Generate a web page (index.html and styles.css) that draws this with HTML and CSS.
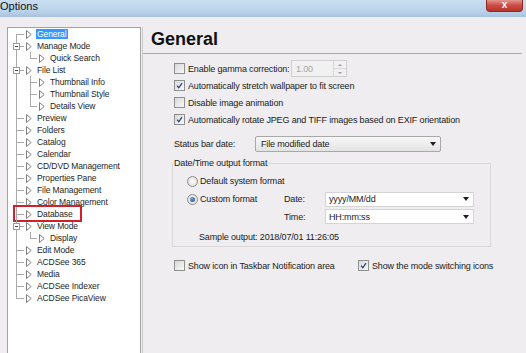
FILE: index.html
```
<!DOCTYPE html>
<html>
<head>
  <meta charset="UTF-8">
  <title>Options</title>
  <meta name="viewport" content="width=device-width,initial-scale=1.0">
  <link rel="stylesheet" href="styles.css">
</head>
<body>
  <svg class="defs" width="0" height="0">
    <symbol id="tri" viewBox="0 0 6 9"><polygon points="0.5,0.5 5.2,4.5 0.5,8.5"/></symbol>
    <symbol id="tick" viewBox="0 0 11 11"><path d="M2.5 5.8 L4.6 8.2 L8.6 2.6"/></symbol>
  </svg>

  <div class="titlebar">
    <span class="title">Options</span>
    <span class="close">x</span>
  </div>

  <div class="win">
    <!-- option tree -->
    <nav class="tree">
      <div class="row"><span class="g1 first"></span><span class="tc"><svg class="tri"><use href="#tri"/></svg></span><span class="lbl sel">General</span></div>
      <div class="row"><span class="g1 tee"><i class="exp"></i></span><span class="tc"><svg class="tri"><use href="#tri"/></svg></span><span class="lbl">Manage Mode</span></div>
      <div class="row"><span class="g1 pass"></span><span class="g2 last"></span><span class="tc"><svg class="tri"><use href="#tri"/></svg></span><span class="lbl">Quick Search</span></div>
      <div class="row"><span class="g1 tee"><i class="exp"></i></span><span class="tc"><svg class="tri"><use href="#tri"/></svg></span><span class="lbl">File List</span></div>
      <div class="row"><span class="g1 pass"></span><span class="g2 tee"></span><span class="tc"><svg class="tri"><use href="#tri"/></svg></span><span class="lbl">Thumbnail Info</span></div>
      <div class="row"><span class="g1 pass"></span><span class="g2 tee"></span><span class="tc"><svg class="tri"><use href="#tri"/></svg></span><span class="lbl">Thumbnail Style</span></div>
      <div class="row"><span class="g1 pass"></span><span class="g2 last"></span><span class="tc"><svg class="tri"><use href="#tri"/></svg></span><span class="lbl">Details View</span></div>
      <div class="row"><span class="g1 tee"></span><span class="tc"><svg class="tri"><use href="#tri"/></svg></span><span class="lbl">Preview</span></div>
      <div class="row"><span class="g1 tee"></span><span class="tc"><svg class="tri"><use href="#tri"/></svg></span><span class="lbl">Folders</span></div>
      <div class="row"><span class="g1 tee"></span><span class="tc"><svg class="tri"><use href="#tri"/></svg></span><span class="lbl">Catalog</span></div>
      <div class="row"><span class="g1 tee"></span><span class="tc"><svg class="tri"><use href="#tri"/></svg></span><span class="lbl">Calendar</span></div>
      <div class="row"><span class="g1 tee"></span><span class="tc"><svg class="tri"><use href="#tri"/></svg></span><span class="lbl">CD/DVD Management</span></div>
      <div class="row"><span class="g1 tee"></span><span class="tc"><svg class="tri"><use href="#tri"/></svg></span><span class="lbl">Properties Pane</span></div>
      <div class="row"><span class="g1 tee"></span><span class="tc"><svg class="tri"><use href="#tri"/></svg></span><span class="lbl">File Management</span></div>
      <div class="row"><span class="g1 tee"></span><span class="tc"><svg class="tri"><use href="#tri"/></svg></span><span class="lbl">Color Management</span></div>
      <div class="row mark"><span class="g1 tee"></span><span class="tc"><svg class="tri"><use href="#tri"/></svg></span><span class="lbl">Database</span></div>
      <div class="row"><span class="g1 tee"><i class="exp"></i></span><span class="tc"><svg class="tri"><use href="#tri"/></svg></span><span class="lbl">View Mode</span></div>
      <div class="row"><span class="g1 pass"></span><span class="g2 last"></span><span class="tc"><svg class="tri"><use href="#tri"/></svg></span><span class="lbl">Display</span></div>
      <div class="row"><span class="g1 tee"></span><span class="tc"><svg class="tri"><use href="#tri"/></svg></span><span class="lbl">Edit Mode</span></div>
      <div class="row"><span class="g1 tee"></span><span class="tc"><svg class="tri"><use href="#tri"/></svg></span><span class="lbl">ACDSee 365</span></div>
      <div class="row"><span class="g1 tee"></span><span class="tc"><svg class="tri"><use href="#tri"/></svg></span><span class="lbl">Media</span></div>
      <div class="row"><span class="g1 tee"></span><span class="tc"><svg class="tri"><use href="#tri"/></svg></span><span class="lbl">ACDSee Indexer</span></div>
      <div class="row"><span class="g1 last"></span><span class="tc"><svg class="tri"><use href="#tri"/></svg></span><span class="lbl">ACDSee PicaView</span></div>
    </nav>

    <!-- settings page -->
    <main class="pane">
      <h1 class="head">General</h1>
      <div class="rule"></div>

      <div class="opts">
        <div class="opt gamma">
          <label class="chk"><span class="box"></span>Enable gamma correction:</label>
          <span class="spin">1.00<span class="arrows"><i class="up"></i><i class="down"></i></span></span>
        </div>
        <div class="opt"><label class="chk"><span class="box"><svg class="tick"><use href="#tick"/></svg></span>Automatically stretch wallpaper to fit screen</label></div>
        <div class="opt"><label class="chk"><span class="box"></span>Disable image animation</label></div>
        <div class="opt"><label class="chk"><span class="box"><svg class="tick"><use href="#tick"/></svg></span>Automatically rotate JPEG and TIFF images based on EXIF orientation</label></div>

        <div class="status">
          <span>Status bar date:</span>
          <span class="select">File modified date<i class="dd"></i></span>
        </div>

        <fieldset class="grp">
          <legend>Date/Time output format</legend>
          <div class="r1"><span class="radio"></span>Default system format</div>
          <div class="fmt">
            <span class="r2"><span class="radio on"></span>Custom format</span>
            <span>Date:</span>
            <span class="combo">yyyy/MM/dd<i class="dd"></i></span>
            <span class="c2">Time:</span>
            <span class="combo">HH:mm:ss<i class="dd"></i></span>
          </div>
          <div class="sample">Sample output: 2018/07/01 11:26:05</div>
        </fieldset>

        <div class="bottom">
          <label class="chk"><span class="box"></span>Show icon in Taskbar Notification area</label>
          <label class="chk"><span class="box"><svg class="tick"><use href="#tick"/></svg></span>Show the mode switching icons</label>
        </div>
      </div>
    </main>
  </div>
</body>
</html>
```

FILE: styles.css
```
body{margin:0;height:353px;overflow:hidden;background:#efedef;color:#1b1b1b;font-family:"Liberation Sans",Arial,sans-serif;}
.defs{position:absolute;}

/* title bar */
.titlebar{display:flex;height:17px;background:linear-gradient(#cadef1,#bad2ea 65%,#a9c2dc);}
.title{font-size:11px;line-height:13px;color:#111;}
.close{
  margin-left:auto;margin-right:3px;width:37px;height:12px;box-sizing:border-box;
  background:linear-gradient(#e4958f,#cb4a41 50%,#b6352c);
  border:1px solid #8d2a22;border-top:0;border-radius:0 0 4px 4px;
  color:#fff;font-size:10px;line-height:9px;font-weight:bold;text-align:center;
}

.win{display:flex;height:336px;box-sizing:border-box;padding:10px 4px 0 7px;}

/* tree */
.tree{--ln:#a9a9a9;width:134px;flex:none;box-sizing:border-box;background:#fff;border:1px solid #a3a3a3;border-bottom:0;font-size:8.5px;letter-spacing:-.1px;color:#1e1e1e;}
.row{display:flex;align-items:center;height:12px;position:relative;}
.g1,.g2{height:12px;flex:none;display:flex;align-items:center;background-repeat:no-repeat;}
.g1{width:16px;}
.g2{width:13px;}
.g1.first,.g1.tee,.g1.last,.g2.tee,.g2.last{background-image:linear-gradient(var(--ln),var(--ln)),linear-gradient(var(--ln),var(--ln));}
.g1.first{background-position:8px 6px,8px 6px;background-size:1px 6px,8px 1px;}
.g1.tee{background-position:8px 0,8px 6px;background-size:1px 12px,8px 1px;}
.g1.last{background-position:8px 0,8px 6px;background-size:1px 7px,8px 1px;}
.g1.pass{background-image:linear-gradient(var(--ln),var(--ln));background-position:8px 0;background-size:1px 12px;}
.g2.tee{background-position:6px 0,6px 6px;background-size:1px 12px,7px 1px;}
.g2.last{background-position:6px 0,6px 6px;background-size:1px 7px,7px 1px;}
.exp{width:7px;height:7px;margin-left:5px;box-sizing:border-box;border:1px solid #9b9b9b;background:#fff;display:flex;align-items:center;justify-content:center;}
.exp::after{content:"";width:3px;height:1px;background:#4a4a4a;}
.tc{width:12px;flex:none;display:flex;align-items:center;}
.tri{width:6px;height:9px;margin-left:2px;fill:#fff;stroke:#808080;stroke-width:1;}
.lbl{padding:0 1px;line-height:10px;white-space:nowrap;}
.sel{background:#3399ff;color:#fff;}
.row.mark::after{content:"";position:absolute;left:5px;top:-3px;width:69px;height:17px;box-sizing:border-box;border:2px solid #d21f2b;}

/* page */
.pane{flex:1;margin-left:1px;padding-top:1px;border-left:1px solid #cdcbcd;font-size:9px;letter-spacing:-.15px;}
.head{margin:0 0 0 8px;font-size:18px;line-height:22px;font-weight:bold;letter-spacing:0;color:#111;}
.rule{height:1px;margin-top:3px;background:#aaa;}
.opts{padding:6px 0 0 31px;}
.opt{display:flex;align-items:center;height:17px;}
.chk{display:flex;align-items:center;gap:3px;white-space:nowrap;}
.box{
  width:11px;height:11px;flex:none;box-sizing:border-box;
  border:1px solid #8e8f8f;background:linear-gradient(135deg,#d9d9d9,#f8f8f8);
  display:flex;align-items:center;justify-content:center;
}
.tick{width:11px;height:11px;fill:none;stroke:#1d3b7c;stroke-width:1.4;}

.gamma{display:grid;grid-template-columns:117px 56px;}
.spin{height:17px;box-sizing:border-box;border:1px solid #cfcfcf;background:#f1f1f1;color:#a4a4a4;display:flex;align-items:center;padding-left:4px;}
.arrows{margin-left:auto;width:12px;height:15px;display:flex;flex-direction:column;border-left:1px solid #d6d6d6;}
.arrows i{flex:1;display:flex;align-items:center;justify-content:center;}
.arrows .up{border-bottom:1px solid #dadada;}
.arrows .up::after{content:"";border-left:2px solid transparent;border-right:2px solid transparent;border-bottom:2px solid #9a9a9a;}
.arrows .down::after{content:"";border-left:2px solid transparent;border-right:2px solid transparent;border-top:2px solid #9a9a9a;}

.status{display:grid;grid-template-columns:81px 186px;align-items:center;height:16px;margin-top:8px;}
.select{height:16px;box-sizing:border-box;border:1px solid #a9a9a9;border-radius:2px;background:linear-gradient(#f7f7f7,#e3e3e3);display:flex;align-items:center;padding:0 4px 0 5px;}
.dd{margin-left:auto;width:0;height:0;border-left:3px solid transparent;border-right:3px solid transparent;border-top:4px solid #1f1f1f;}

/* group box */
.grp{margin:5px 0 0 -2px;width:319px;min-width:0;box-sizing:border-box;padding:0 0 3px;border:1px solid #d9d7d9;}
.grp legend{padding:0 1px;line-height:12px;}
.r1{display:flex;align-items:center;gap:2px;height:16px;margin:4px 0 0 14px;}
.r2{display:flex;align-items:center;gap:2px;}
.radio{
  width:11px;height:11px;flex:none;box-sizing:border-box;border-radius:50%;
  border:1px solid #8d8d8d;background:radial-gradient(#fdfdfd,#d8d8d8);
  display:flex;align-items:center;justify-content:center;
}
.radio.on::after{content:"";width:5px;height:5px;border-radius:50%;background:radial-gradient(circle at 40% 35%,#79a8e0,#1a3f80);}
.fmt{display:grid;grid-template-columns:97px 41px 149px;grid-template-rows:16px 15px;row-gap:2px;align-items:center;margin:2px 0 0 14px;}
.fmt .c2{grid-column:2;}
.combo{height:15px;box-sizing:border-box;border:1px solid #d4d4d4;background:#fff;display:flex;align-items:center;padding:0 4px 0 3px;}
.sample{margin:7px 0 0 26px;line-height:12px;}

.bottom{display:grid;grid-template-columns:184px auto;align-items:center;height:17px;margin-top:10px;}
```
